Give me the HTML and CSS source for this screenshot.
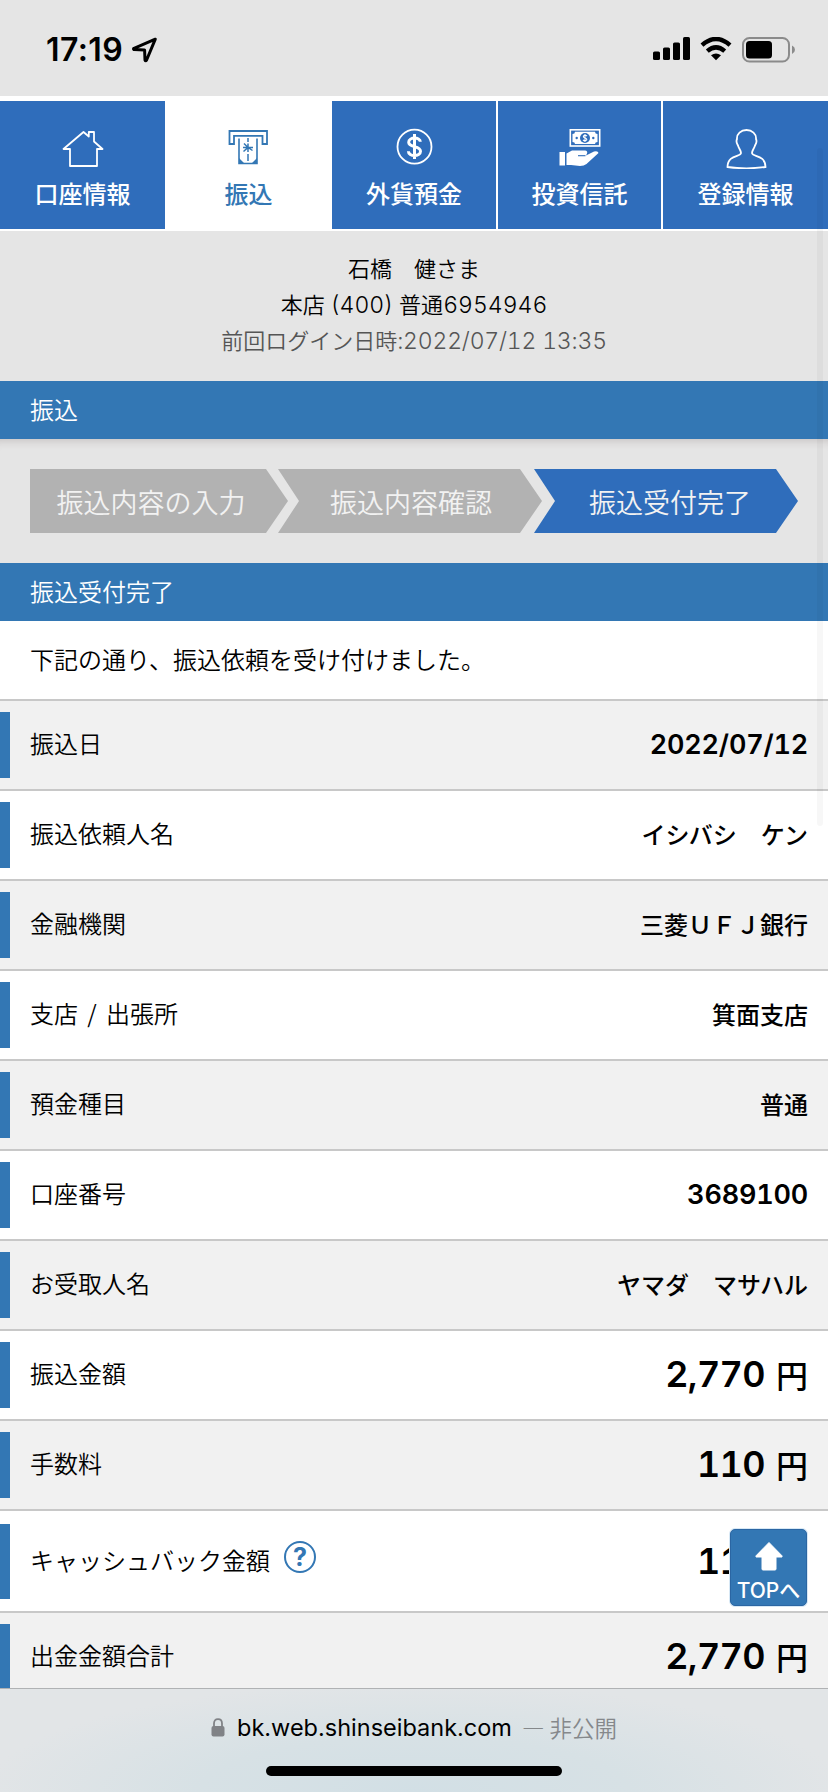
FILE: index.html
```html
<!DOCTYPE html>
<html lang="ja">
<head>
    <meta charset="UTF-8">
    <meta name="viewport" content="width=device-width, initial-scale=1.0">
    <title>振込受付完了</title>
    <link rel="stylesheet" href="styles.css">
</head>
<body>
    <div class="status-bar">
        <div class="status-left">
            <span class="time">17:19</span>
            <svg class="location" width="26" height="26" viewBox="0 0 26 26">
                <path d="M23.3 2.2 L2 11.3 Q1 12 2 12.6 L12.6 13 L13 23 Q13.6 24.3 14.6 23 Z" fill="none" stroke="#000" stroke-width="3" stroke-linejoin="round"/>
            </svg>
        </div>
        <div class="status-right">
            <svg width="37" height="24" viewBox="0 0 37 24">
                <rect x="0" y="14.5" width="7" height="8.5" rx="1.6"/>
                <rect x="10" y="10.5" width="7" height="12.5" rx="1.6"/>
                <rect x="20" y="5.5" width="7" height="17.5" rx="1.6"/>
                <rect x="30" y="0" width="7" height="23" rx="1.6"/>
            </svg>
            <svg width="32" height="24" viewBox="0 0 32 24">
                <path d="M2 8.2 Q16 -4.2 30 8.2" fill="none" stroke="#000" stroke-width="4.4"/>
                <path d="M7.3 14.2 Q16 6.6 24.7 14.2" fill="none" stroke="#000" stroke-width="4.4"/>
                <path d="M11 18.3 Q16 14.6 21 18.3 L16 23.2 Z"/>
            </svg>
            <svg width="53" height="26" viewBox="0 0 53 26">
                <rect x="1" y="1" width="46" height="23.5" rx="6.5" fill="none" stroke="#8b8b8b" stroke-width="2"/>
                <rect x="4" y="4" width="26" height="17.5" rx="3.5"/>
                <path d="M50 8.5 Q53 10 53 12.7 Q53 15.5 50 17 Z" fill="#8b8b8b"/>
            </svg>
        </div>
    </div>

    <div class="page">
        <div class="nav">
            <a class="tab">
                <svg width="44" height="44" viewBox="0 0 44 44">
                    <path d="M22.5 7 L2.5 24 H9 V41 H36 V24 H41.5 L33 16.500 V7 H27.8 V11.5 Z" fill="none" stroke="#fff" stroke-width="1.8" stroke-linejoin="round"/>
                </svg>
                <span>口座情報</span>
            </a>
            <a class="tab active">
                <svg width="44" height="44" viewBox="0 0 44 44">
                    <path d="M2.5 6 H40 V19 H35.5 V10.8 H7 V19 H2.5 Z" fill="none" stroke="#3377b4" stroke-width="1.8"/>
                    <path d="M12 13.5 V38.5 H30 V13.5" fill="none" stroke="#3377b4" stroke-width="1.6"/>
                    <path d="M12 33 L17.5 38.5 H12 Z M30 33 L24.5 38.5 H30 Z" fill="#3377b4"/>
                    <path d="M21 13 V17 M21 29 V36 M21 18.5 V27 M16 22.5 H26 M16.5 26.5 L21 22.5 L25.5 25.5 M17 18.5 L21 22.5" fill="none" stroke="#3377b4" stroke-width="1.5"/>
                </svg>
                <span>振込</span>
            </a>
            <a class="tab">
                <svg width="44" height="44" viewBox="0 0 44 44">
                    <circle cx="22.5" cy="21.7" r="17" fill="none" stroke="#fff" stroke-width="1.8"/>
                    <path d="M28.3 16.8 C28.3 11.8 16.7 11.8 16.7 17.2 C16.7 23 28.5 20.3 28.5 26.3 C28.5 32 16.4 32 16.4 26.3 M22.5 9 V34" fill="none" stroke="#fff" stroke-width="3"/>
                </svg>
                <span>外貨預金</span>
            </a>
            <a class="tab">
                <svg width="44" height="44" viewBox="0 0 44 44">
                    <rect x="12.3" y="4.8" width="29.4" height="16.2" fill="none" stroke="#fff" stroke-width="1.6"/>
                    <path d="M17 6.8 H37 Q37 9 39.5 9 V17 Q37 17 37 19 H17 Q17 17 14.5 17 V9 Q17 9 17 6.8 Z" fill="#fff"/>
                    <circle cx="27" cy="13" r="5" fill="#2f6dbb"/>
                    <circle cx="18.7" cy="13" r="1.2" fill="#2f6dbb"/>
                    <circle cx="35.3" cy="13" r="1.2" fill="#2f6dbb"/>
                    <path d="M29 11 Q27 9.5 25.5 11 Q25 12.5 27 13 Q29.5 13.8 28.5 15.2 Q27 16.5 25 15 M27 9 V17" fill="none" stroke="#fff" stroke-width="1.1"/>
                    <path d="M1.5 27 H7 V40.5 H1.5 Z M8.5 28.5 L14 25.5 H27 Q30 25.8 29 28.5 L28 30.5 L36 26.5 Q40 25.5 40.5 28 L28.5 39 Q26 41 22 41 L13 40 H8.5 Z" fill="#fff"/>
                    <path d="M20 30.7 H27.5" stroke="#2f6dbb" stroke-width="1.1"/>
                </svg>
                <span>投資信託</span>
            </a>
            <a class="tab">
                <svg width="44" height="44" viewBox="0 0 44 44">
                    <path d="M22.5 5 C28 5 32.5 9 32 14 C33.5 17 31.5 19.5 31 20.5 C30 24 28 25.5 28 28 C28 32 41.5 29.5 41.5 42 Q32 43.3 22.5 43.3 Q13 43.3 3.5 42 C3.5 29.5 17 32 17 28 C17 25.5 15 24 14 20.5 C13.5 19.5 11.5 17 13 14 C12.5 9 17 5 22.5 5 Z" fill="none" stroke="#fff" stroke-width="1.8"/>
                </svg>
                <span>登録情報</span>
            </a>
        </div>

        <div class="account">
            <p>石橋　健さま</p>
            <p class="branch">本店 <span class="num">(400)</span> 普通<span class="num">6954946</span></p>
            <p class="last-login">前回ログイン日時<span class="num">:2022/07/12 13:35</span></p>
        </div>

        <h1 class="heading">振込</h1>
        <div class="steps">
            <div class="step step-first">振込内容の入力</div>
            <div class="step">振込内容確認</div>
            <div class="step step-current">振込受付完了</div>
        </div>
        <h2 class="heading">振込受付完了</h2>
        <p class="message">下記の通り、振込依頼を受け付けました。</p>

        <dl class="details">
            <div class="row"><dt>振込日</dt><dd class="num">2022/07/12</dd></div>
            <div class="row"><dt>振込依頼人名</dt><dd>イシバシ　ケン</dd></div>
            <div class="row"><dt>金融機関</dt><dd>三菱ＵＦＪ銀行</dd></div>
            <div class="row"><dt>支店 / 出張所</dt><dd>箕面支店</dd></div>
            <div class="row"><dt>預金種目</dt><dd>普通</dd></div>
            <div class="row"><dt>口座番号</dt><dd class="num">3689100</dd></div>
            <div class="row"><dt>お受取人名</dt><dd>ヤマダ　マサハル</dd></div>
            <div class="row"><dt>振込金額</dt><dd class="amount"><span class="num">2,770</span>円</dd></div>
            <div class="row"><dt>手数料</dt><dd class="amount"><span class="num">110</span>円</dd></div>
            <div class="row row-tall"><dt>キャッシュバック金額<span class="help">?</span></dt><dd class="amount"><span class="num">110</span>円</dd></div>
            <div class="row"><dt>出金金額合計</dt><dd class="amount"><span class="num">2,770</span>円</dd></div>
        </dl>
    </div>

    <div class="browser-bar">
        <div class="address">
            <svg width="14" height="19" viewBox="0 0 14 19">
                <path d="M3 9 V5.5 Q3 1.2 7 1.2 Q11 1.2 11 5.5 V9" fill="none" stroke="#808286" stroke-width="1.8"/>
                <rect x="0.5" y="8" width="13" height="10.5" rx="2" fill="#808286"/>
            </svg>
            <span class="domain">bk.web.shinseibank.com</span>
            <span class="private">— 非公開</span>
        </div>
        <div class="home-indicator"></div>
    </div>

    <a class="to-top">
        <svg width="30" height="30" viewBox="0 0 30 30">
            <path d="M15 1.5 L28 14.8 V16 H22 V28 Q22 29 21 29 H9 Q8 29 8 28 V16 H2 V14.8 Z" fill="#fff" stroke="#fff" stroke-width="1" stroke-linejoin="round"/>
        </svg>
        <span>TOPへ</span>
    </a>
    <div class="scrollbar"></div>
</body>
</html>
```
FILE: styles.css
```css
* {
    box-sizing: border-box;
}
body {
    display: flex;
    flex-direction: column;
    position: relative;
    width: 828px;
    height: 1792px;
    margin: 0;
    overflow: hidden;
    background-color: #fff;
    color: #000;
    font-family: "Noto Sans CJK JP", sans-serif;
    font-size: 24px;
    font-weight: 350;
}
h1, h2, p, dl, dd {
    margin: 0;
}
svg {
    display: block;
    flex: none;
}
.num {
    font-family: Inter, "Noto Sans CJK JP", sans-serif;
    font-feature-settings: "tnum";
}

/* status bar */
.status-bar {
    display: flex;
    flex: none;
    justify-content: space-between;
    height: 96px;
    padding: 37px 33px 0 46px;
    background-color: #e5e5e5;
}
.status-left, .status-right {
    display: flex;
}
.time {
    width: 86px;
    font: 600 32px/26px Inter, sans-serif;
    letter-spacing: 0.4px;
}
.status-right {
    gap: 10px;
}

/* page */
.page {
    flex: 1;
    min-height: 0;
    overflow: hidden;
    padding-top: 5px;
}
.nav {
    display: grid;
    grid-template-columns: 165px 163px 164px 163px 165px;
    gap: 2px;
    height: 130px;
    padding-bottom: 2px;
}
.tab {
    display: flex;
    flex-direction: column;
    align-items: center;
    gap: 6px;
    padding-top: 24px;
    background-color: #2f6dbb;
    color: #fff;
    font-weight: 500;
    line-height: 36px;
}
.tab.active {
    background-color: #fff;
    color: #3377b4;
}
.account {
    height: 150px;
    padding-top: 18px;
    background-color: #e5e5e5;
    font-size: 22px;
    line-height: 36px;
    text-align: center;
}
.account p {
    height: 36px;
}
.account .num {
    font-size: 23px;
    font-weight: 300;
}
.branch {
    word-spacing: 1px;
}
.last-login {
    color: #555;
}
.last-login .num {
    letter-spacing: -0.2px;
}
.heading {
    height: 58px;
    padding-left: 30px;
    background-color: #3377b4;
    color: #fff;
    font-size: 24px;
    font-weight: 350;
    line-height: 55px;
}
.steps {
    display: flex;
    height: 124px;
    padding: 30px;
    background-color: #e5e5e5;
    box-shadow: inset 0 10px 8px -8px rgba(80, 60, 60, 0.2);
}
.step {
    width: 264px;
    margin-left: -10px;
    padding-left: 2px;
    background-color: #b2b2b2;
    color: #f2f2f2;
    font-size: 27px;
    line-height: 65px;
    text-align: center;
    clip-path: polygon(0 0, calc(100% - 22px) 0, 100% 50%, calc(100% - 22px) 100%, 0 100%, 21px 50%);
}
.step-first {
    width: 258px;
    margin-left: 0;
    padding-right: 18px;
    clip-path: polygon(0 0, calc(100% - 22px) 0, 100% 50%, calc(100% - 22px) 100%, 0 100%);
}
.step-current {
    margin-left: -8px;
    padding-left: 8px;
    background-color: #2f6dbb;
}
.message {
    height: 78px;
    padding-left: 30px;
    line-height: 76px;
}

/* transfer details */
.row {
    display: flex;
    align-items: center;
    height: 90px;
    padding: 11px 20px 11px 0;
    border-top: 2px solid #c8c8c8;
}
.row:nth-child(odd) {
    background-color: #f1f1f1;
}
.row-tall {
    height: 102px;
    padding-top: 13px;
    padding-bottom: 12px;
}
dt {
    display: flex;
    flex: 1;
    align-items: center;
    align-self: stretch;
    padding: 0 0 5px 20px;
    border-left: 10px solid #3377b4;
    word-spacing: 4px;
}
dd {
    padding-bottom: 2px;
    font-weight: 500;
    line-height: 36px;
}
dd.num {
    padding-bottom: 0;
    font-size: 27px;
    font-weight: 600;
    letter-spacing: -0.2px;
}
.amount {
    display: flex;
    align-items: center;
    gap: 11px;
    font-size: 32px;
}
.amount .num {
    font-size: 36px;
    font-weight: 600;
    letter-spacing: -0.6px;
}
.help {
    width: 32px;
    height: 32px;
    margin: -4px 0 0 14px;
    border: 2px solid #3377b4;
    border-radius: 50%;
    color: #3377b4;
    font: 700 25px/28px Inter, sans-serif;
    text-align: center;
}

/* overlays */
.to-top {
    display: flex;
    position: absolute;
    right: 21px;
    bottom: 186px;
    flex-direction: column;
    align-items: center;
    width: 77px;
    height: 77px;
    padding-top: 11px;
    border: 1px solid #2b66a3;
    border-radius: 5px;
    background-color: #3377b4;
    box-shadow: 0 0 0 1px #d7e8f5;
    color: #fff;
    font: 500 21px/40px Inter, "Noto Sans CJK JP", sans-serif;
}
.scrollbar {
    position: absolute;
    top: 148px;
    right: 5px;
    width: 6px;
    height: 678px;
    border-radius: 3px;
    background-color: rgba(0, 0, 0, 0.03);
}
.browser-bar {
    display: flex;
    flex: none;
    flex-direction: column;
    align-items: center;
    height: 104px;
    border-top: 1px solid #b0b2b4;
    background: radial-gradient(ellipse 430px 110px at 50% 100%, #d2dfe5, #d7e1e5 50%, #e2e5e7);
}
.address {
    display: flex;
    align-items: center;
    height: 77px;
    font-size: 23px;
}
.domain {
    margin: 0 10px 0 12px;
    font-family: Inter, sans-serif;
    font-size: 23.5px;
    font-weight: 400;
}
.private {
    padding-bottom: 2px;
    color: #85888b;
    font-size: 22.5px;
}
.home-indicator {
    width: 296px;
    height: 10px;
    border-radius: 5px;
    background-color: #000;
}
```
